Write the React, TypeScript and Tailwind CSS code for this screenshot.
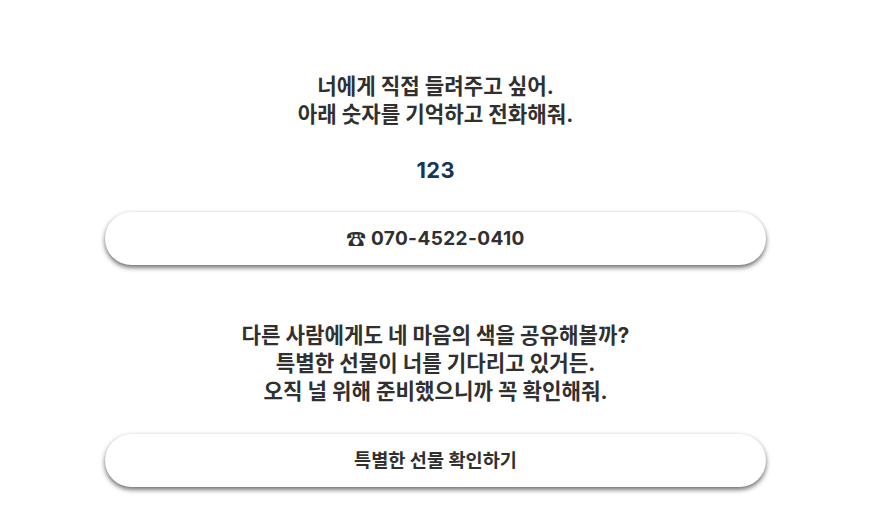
import React from "react";

interface PillButtonProps {
  children: React.ReactNode;
  className?: string;
}

const PillButton = ({ children, className = "" }: PillButtonProps) => (
  <button
    className={`flex h-[53px] w-[661px] items-center justify-center rounded-full bg-white shadow-[0_2.5px_5px_rgba(0,0,0,0.6)] ${className}`}
  >
    {children}
  </button>
);

export default function App() {
  return (
    <main className="flex h-[523px] w-[871px] flex-col items-center bg-white pt-[72px] text-center font-['Inter','Noto_Sans_CJK_KR',sans-serif] text-[21.2px] leading-[28px] font-bold text-[#303030]">
      <p className="whitespace-nowrap">
        너에게 직접 들려주고 싶어.
        <br />
        아래 숫자를 기억하고 전화해줘.
      </p>
      <p className="mt-7 pl-[0.4px] text-[21.8px] tracking-[0.4px] text-[#15365a]">123</p>
      <PillButton className="mt-[28px]">
        <span className="flex items-center gap-[5px]">
          <span className="text-[19.7px]">☎</span>
          <span className="text-[19px] tracking-[0.4px]">070-4522-0410</span>
        </span>
      </PillButton>
      <p className="mt-[56px] whitespace-nowrap">
        다른 사람에게도 네 마음의 색을 공유해볼까?
        <br />
        특별한 선물이 너를 기다리고 있거든.
        <br />
        오직 널 위해 준비했으니까 꼭 확인해줘.
      </p>
      <PillButton className="mt-[29px] pb-0.5">
        <span className="text-[18.6px]">특별한 선물 확인하기</span>
      </PillButton>
    </main>
  );
}
